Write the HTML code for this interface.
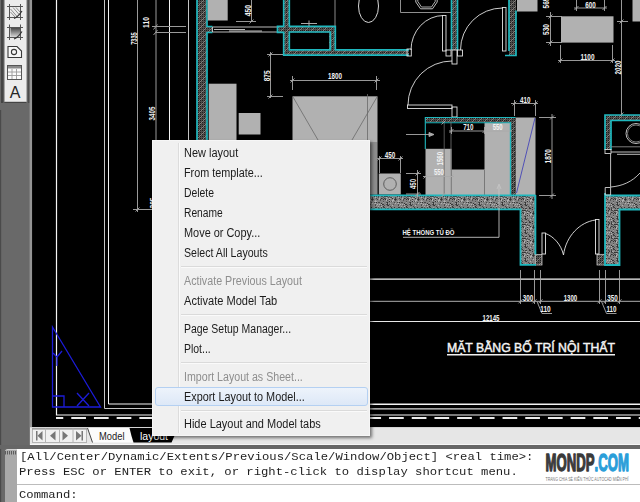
<!DOCTYPE html>
<html>
<head>
<meta charset="utf-8">
<title>AutoCAD layout menu</title>
<style>
html,body{margin:0;padding:0;}
body{width:640px;height:502px;overflow:hidden;background:#696969;position:relative;font-family:"Liberation Sans",sans-serif;}
.abs{position:absolute;}
#draw{left:0;top:0;width:640px;height:502px;}
#tabbar{left:30px;top:426.500px;width:610px;height:18.300px;background:#e6e6e6;border-top:1.500px solid #d4d4d4;border-bottom:1.800px solid #f6f6f6;box-sizing:border-box;}
#cmdbar{left:0;top:444.800px;width:640px;height:4.200px;background:#666;}
#cmd{left:17px;top:449px;width:623px;height:53px;background:#fff;}
#grip{left:4.5px;top:449px;width:13px;height:53px;background:#a9a9a9;border-top:1px solid #d2d2d2;border-radius:3px 0 0 0;box-sizing:border-box;}
.mono{font-family:"Liberation Mono",monospace;font-size:10.5px;color:#1e1e1e;white-space:pre;line-height:14px;transform:scaleX(1.164);transform-origin:0 0;}
#menu{left:152px;top:139.5px;width:218.300px;height:296px;background:#f0f0f0;box-shadow:2px 2px 3px rgba(0,0,0,0.5);border:1px solid #f6f6f6;box-sizing:border-box;}
.mi{position:absolute;margin-top:0.5px;left:30.500px;font-size:12px;color:#1b1b1b;white-space:nowrap;line-height:14px;transform-origin:0 50%;}
.mi.dis{color:#8e8e8e;}
.sep{position:absolute;margin-top:-0.500px;left:28px;right:2px;height:1px;background:#dadada;border-bottom:1px solid #fafafa;}
#gut{position:absolute;left:25px;top:2px;bottom:2px;width:1px;background:#dcdcdc;border-right:1px solid #fafafa;}
#hl{position:absolute;left:2px;top:246px;width:213px;height:19.500px;border:1px solid #b4d0f2;border-radius:3px;background:linear-gradient(#edf3fb,#dde8f7);box-sizing:border-box;}
#logo{left:545px;top:449px;width:90px;height:34px;}
</style>
</head>
<body>
<svg id="draw" class="abs" width="640" height="502" viewBox="0 0 640 502">
<defs>
<pattern id="hatch" width="6" height="6" patternUnits="userSpaceOnUse">
<rect width="6" height="6" fill="#504e4c"/>
<g fill="#1e1e1e"><rect x="0" y="0" width="1" height="1"/><rect x="2" y="0" width="1" height="1"/><rect x="4" y="0" width="1" height="1"/><rect x="0" y="2" width="1" height="1"/><rect x="2" y="2" width="1" height="1"/><rect x="4" y="2" width="1" height="1"/><rect x="0" y="4" width="1" height="1"/><rect x="2" y="4" width="1" height="1"/><rect x="4" y="4" width="1" height="1"/></g>
<path d="M-1 7L7 -1M-1 1L1 -1M5 7L7 5" stroke="#8a8682" stroke-width="0.900"/>
</pattern>
<pattern id="stip" width="23" height="14" patternUnits="userSpaceOnUse">
<rect width="23" height="14" fill="#828282"/>
<rect x="6" y="0" width="1" height="1" fill="#333"/><rect x="8" y="0" width="1" height="1" fill="#3c3c3c"/><rect x="10" y="0" width="1" height="1" fill="#333"/><rect x="13" y="0" width="1" height="1" fill="#484848"/><rect x="14" y="0" width="1" height="1" fill="#484848"/><rect x="16" y="0" width="1" height="1" fill="#333"/><rect x="17" y="0" width="1" height="1" fill="#3c3c3c"/><rect x="18" y="0" width="1" height="1" fill="#333"/><rect x="19" y="0" width="1" height="1" fill="#3c3c3c"/><rect x="21" y="0" width="1" height="1" fill="#484848"/><rect x="0" y="1" width="1" height="1" fill="#484848"/><rect x="1" y="1" width="1" height="1" fill="#a6a6a6"/><rect x="4" y="1" width="1" height="1" fill="#484848"/><rect x="7" y="1" width="1" height="1" fill="#b2b2b2"/><rect x="10" y="1" width="1" height="1" fill="#525252"/><rect x="11" y="1" width="1" height="1" fill="#9c9c9c"/><rect x="15" y="1" width="1" height="1" fill="#525252"/><rect x="18" y="1" width="1" height="1" fill="#b2b2b2"/><rect x="20" y="1" width="1" height="1" fill="#525252"/><rect x="22" y="1" width="1" height="1" fill="#525252"/><rect x="1" y="2" width="1" height="1" fill="#333"/><rect x="4" y="2" width="1" height="1" fill="#3c3c3c"/><rect x="8" y="2" width="1" height="1" fill="#484848"/><rect x="11" y="2" width="1" height="1" fill="#b2b2b2"/><rect x="13" y="2" width="1" height="1" fill="#333"/><rect x="14" y="2" width="1" height="1" fill="#525252"/><rect x="16" y="2" width="1" height="1" fill="#3c3c3c"/><rect x="17" y="2" width="1" height="1" fill="#525252"/><rect x="19" y="2" width="1" height="1" fill="#9c9c9c"/><rect x="21" y="2" width="1" height="1" fill="#b2b2b2"/><rect x="22" y="2" width="1" height="1" fill="#a6a6a6"/><rect x="2" y="3" width="1" height="1" fill="#b2b2b2"/><rect x="3" y="3" width="1" height="1" fill="#3c3c3c"/><rect x="4" y="3" width="1" height="1" fill="#333"/><rect x="5" y="3" width="1" height="1" fill="#525252"/><rect x="9" y="3" width="1" height="1" fill="#3c3c3c"/><rect x="11" y="3" width="1" height="1" fill="#a6a6a6"/><rect x="12" y="3" width="1" height="1" fill="#484848"/><rect x="15" y="3" width="1" height="1" fill="#333"/><rect x="17" y="3" width="1" height="1" fill="#333"/><rect x="18" y="3" width="1" height="1" fill="#b2b2b2"/><rect x="21" y="3" width="1" height="1" fill="#333"/><rect x="1" y="4" width="1" height="1" fill="#b2b2b2"/><rect x="2" y="4" width="1" height="1" fill="#b2b2b2"/><rect x="4" y="4" width="1" height="1" fill="#484848"/><rect x="7" y="4" width="1" height="1" fill="#a6a6a6"/><rect x="12" y="4" width="1" height="1" fill="#525252"/><rect x="18" y="4" width="1" height="1" fill="#b2b2b2"/><rect x="19" y="4" width="1" height="1" fill="#525252"/><rect x="21" y="4" width="1" height="1" fill="#a6a6a6"/><rect x="0" y="5" width="1" height="1" fill="#525252"/><rect x="1" y="5" width="1" height="1" fill="#b2b2b2"/><rect x="6" y="5" width="1" height="1" fill="#9c9c9c"/><rect x="7" y="5" width="1" height="1" fill="#b2b2b2"/><rect x="8" y="5" width="1" height="1" fill="#a6a6a6"/><rect x="15" y="5" width="1" height="1" fill="#525252"/><rect x="21" y="5" width="1" height="1" fill="#333"/><rect x="22" y="5" width="1" height="1" fill="#9c9c9c"/><rect x="3" y="6" width="1" height="1" fill="#484848"/><rect x="6" y="6" width="1" height="1" fill="#484848"/><rect x="8" y="6" width="1" height="1" fill="#333"/><rect x="10" y="6" width="1" height="1" fill="#484848"/><rect x="11" y="6" width="1" height="1" fill="#484848"/><rect x="15" y="6" width="1" height="1" fill="#9c9c9c"/><rect x="18" y="6" width="1" height="1" fill="#525252"/><rect x="19" y="6" width="1" height="1" fill="#333"/><rect x="4" y="7" width="1" height="1" fill="#b2b2b2"/><rect x="6" y="7" width="1" height="1" fill="#9c9c9c"/><rect x="7" y="7" width="1" height="1" fill="#b2b2b2"/><rect x="13" y="7" width="1" height="1" fill="#333"/><rect x="18" y="7" width="1" height="1" fill="#9c9c9c"/><rect x="19" y="7" width="1" height="1" fill="#3c3c3c"/><rect x="20" y="7" width="1" height="1" fill="#9c9c9c"/><rect x="22" y="7" width="1" height="1" fill="#9c9c9c"/><rect x="2" y="8" width="1" height="1" fill="#525252"/><rect x="7" y="8" width="1" height="1" fill="#525252"/><rect x="9" y="8" width="1" height="1" fill="#b2b2b2"/><rect x="11" y="8" width="1" height="1" fill="#b2b2b2"/><rect x="13" y="8" width="1" height="1" fill="#b2b2b2"/><rect x="14" y="8" width="1" height="1" fill="#333"/><rect x="15" y="8" width="1" height="1" fill="#3c3c3c"/><rect x="18" y="8" width="1" height="1" fill="#525252"/><rect x="19" y="8" width="1" height="1" fill="#333"/><rect x="21" y="8" width="1" height="1" fill="#525252"/><rect x="1" y="9" width="1" height="1" fill="#b2b2b2"/><rect x="7" y="9" width="1" height="1" fill="#484848"/><rect x="8" y="9" width="1" height="1" fill="#9c9c9c"/><rect x="12" y="9" width="1" height="1" fill="#525252"/><rect x="16" y="9" width="1" height="1" fill="#525252"/><rect x="19" y="9" width="1" height="1" fill="#484848"/><rect x="20" y="9" width="1" height="1" fill="#333"/><rect x="10" y="10" width="1" height="1" fill="#a6a6a6"/><rect x="13" y="10" width="1" height="1" fill="#b2b2b2"/><rect x="15" y="10" width="1" height="1" fill="#333"/><rect x="22" y="10" width="1" height="1" fill="#484848"/><rect x="0" y="11" width="1" height="1" fill="#3c3c3c"/><rect x="3" y="11" width="1" height="1" fill="#333"/><rect x="7" y="11" width="1" height="1" fill="#3c3c3c"/><rect x="8" y="11" width="1" height="1" fill="#3c3c3c"/><rect x="10" y="11" width="1" height="1" fill="#525252"/><rect x="13" y="11" width="1" height="1" fill="#484848"/><rect x="15" y="11" width="1" height="1" fill="#484848"/><rect x="16" y="11" width="1" height="1" fill="#3c3c3c"/><rect x="19" y="11" width="1" height="1" fill="#9c9c9c"/><rect x="0" y="12" width="1" height="1" fill="#333"/><rect x="1" y="12" width="1" height="1" fill="#333"/><rect x="5" y="12" width="1" height="1" fill="#525252"/><rect x="6" y="12" width="1" height="1" fill="#525252"/><rect x="10" y="12" width="1" height="1" fill="#484848"/><rect x="11" y="12" width="1" height="1" fill="#525252"/><rect x="13" y="12" width="1" height="1" fill="#484848"/><rect x="17" y="12" width="1" height="1" fill="#3c3c3c"/><rect x="19" y="12" width="1" height="1" fill="#3c3c3c"/><rect x="20" y="12" width="1" height="1" fill="#3c3c3c"/><rect x="3" y="13" width="1" height="1" fill="#3c3c3c"/><rect x="11" y="13" width="1" height="1" fill="#333"/><rect x="13" y="13" width="1" height="1" fill="#333"/><rect x="14" y="13" width="1" height="1" fill="#a6a6a6"/><rect x="15" y="13" width="1" height="1" fill="#9c9c9c"/><rect x="20" y="13" width="1" height="1" fill="#b2b2b2"/>
</pattern>
<filter id="soft" x="-2%" y="-10%" width="104%" height="120%"><feGaussianBlur stdDeviation="0.450"/></filter>
<linearGradient id="gr" x1="0" y1="0" x2="0" y2="1"><stop offset="0" stop-color="#4a4a4a"/><stop offset="1" stop-color="#d8d8d8"/></linearGradient>
</defs>
<!-- frame strips on the left -->
<rect x="0" y="0" width="31" height="449" fill="#696969"/>
<rect x="1" y="0" width="2" height="103" fill="#454545"/><rect x="3" y="0" width="1.500" height="103" fill="#5a5a5a"/>
<rect x="26.500" y="0" width="1" height="103" fill="#8a8a8a"/>
<rect x="27.500" y="0" width="2.300" height="103" fill="#4c4c4c"/>
<rect x="29.600" y="0" width="2.600" height="445" fill="#949494"/>
<rect x="0" y="110" width="1.200" height="392" fill="#4a4a4a"/>
<!-- black canvas -->
<rect x="32.100" y="0" width="607.900" height="427" fill="#000"/>
<g id="cad" fill="none" stroke-width="1">
<!-- ===== far-left sheet border / dimension lines ===== -->
<g stroke="#f4f4f4">
<path d="M56.500 0V415H640" stroke-width="1.200"/>
<path d="M108.500 0V404H152"/>
<path d="M169.5 0V140"/>
</g>
<g stroke="#c4c4c4">
<path d="M104.500 0V408.500H152"/>
<path d="M188.5 0V140"/>
</g>
<g stroke="#9a9a9a">
<path d="M137.500 0V212M133 209.500H152M135.500 211.500l4 -4"/>
<path d="M156 0V140"/>
<path d="M152 26.500H186M156 32.500H186M153.500 29.500l4 -5M153.500 35l4 -5"/>
</g>
<!-- dashed sheet edge -->
<path d="M56 418H640" stroke="#ececec" stroke-width="2" stroke-dasharray="14.700 8" stroke-dashoffset="7.450"/>
<path d="M370 404.300H640" stroke="#f4f4f4" stroke-width="1.400"/>
<path d="M370 408.800H640" stroke="#dcdcdc" stroke-width="1.300"/>
<path d="M370 279.200H640" stroke="#f6f6f6" stroke-width="1.300"/>
<path d="M370 301.300H640" stroke="#b0b0b0"/>
<path d="M370 321.500H640" stroke="#e8e8e8"/>

<!-- ===== blue UCS triangle ===== -->
<g stroke="#1c1cd8" stroke-width="1.300">
<path d="M52.500 327V407H100.500Z"/>
<path d="M52.500 396H64V407"/>
<path d="M53 353l4 4v9M57 357l5 -6"/>
<path d="M77 393l12 13M89 393l-12 13"/>
</g>

<!-- ===== left vertical wall ===== -->
<rect x="197" y="0" width="10" height="140" fill="url(#hatch)" stroke="none"/>
<rect x="207" y="26.500" width="5.500" height="6" fill="url(#hatch)" stroke="none"/>
<g stroke="#1fb8be" stroke-width="1.700">
<path d="M197 0V140"/>
<path d="M207 0V26.500H212.500M212.500 32.500H207V140"/>
</g>
<!-- furniture grey blocks -->
<g fill="#b1b1b1" stroke="none">
<rect x="207.700" y="0" width="20" height="20.500"/>
<rect x="208.700" y="83.700" width="27.800" height="57"/>
<rect x="238.700" y="113" width="21.800" height="21.500"/>
<rect x="292.500" y="96.300" width="85" height="98.500"/>
<rect x="517" y="0" width="20.500" height="11.500"/>
<rect x="561" y="16.300" width="52.500" height="26.300"/>
<rect x="632.500" y="0" width="8" height="21.500"/>
<rect x="378.800" y="173.500" width="22" height="21"/>
<rect x="425.500" y="148.800" width="26" height="46.200"/>
<rect x="451" y="169.500" width="34" height="25.500"/>
<rect x="484.500" y="122.500" width="26" height="72.500"/>
<rect x="515.500" y="117.500" width="20" height="77.500"/>
</g>
<!-- bed lines -->
<g stroke="#6a6a6a" stroke-width="0.800">
<path d="M293 97L318 140M377 97L352 140M367.500 94V140"/>
<path d="M451.300 149V195M484.500 170V195M444.200 122V195"/>
</g>
<circle cx="390" cy="184" r="6.300" stroke="#555" stroke-width="0.900"/>
<path d="M535 118L516.500 193" stroke="#3030b8" stroke-width="0.750"/>

<!-- window in top wall -->
<g stroke="#cfcfcf" stroke-width="0.900">
<path d="M212.500 27H277.500M212.500 32H277.500M212.500 27V32"/>
<path d="M214 29.500H245M229 31H262"/>
</g>

<!-- ===== top small room walls ===== -->
<g fill="url(#hatch)" stroke="none">
<rect x="277.500" y="26.500" width="58" height="6"/>
<rect x="283.500" y="0" width="6" height="55.500"/>
<rect x="329" y="26.500" width="6.500" height="29"/>
<rect x="283.500" y="50" width="125.500" height="5.500"/>
<rect x="451.500" y="0" width="6" height="50"/>
<rect x="509" y="0" width="7" height="55"/>
</g>
<g stroke="#1fb8be" stroke-width="1.700">
<path d="M283.700 0V26.300H277.500V32.300H283.700V55.200H409"/>
<path d="M289.300 0V26.300H335.300V49.800H409"/>
<path d="M289.300 32H330.300V49.800H289.300Z"/>
<path d="M451.500 0V50M457.500 0V50"/>
<path d="M509 0V51M516 10.500V55.500H505"/>
</g>
<path d="M335 0V26" stroke="#8a8a8a"/>
<path d="M301 23.500H317M309 20.500V26" stroke="#aaa"/>
<!-- toilet + sink -->
<ellipse cx="368.500" cy="6" rx="10" ry="16.500" stroke="#d8d8d8"/>
<path d="M400.500 0V12.500H451" stroke="#8f8f8f"/>
<path d="M415.800 0V2L420.500 8.800H432.500L437.200 2V0" stroke="#d4d4d4" stroke-width="0.900" stroke-linejoin="round"/><path d="M417.800 0V1.500L421.500 7H431.500L435.200 1.500V0" stroke="#bdbdbd" stroke-width="0.900" stroke-linejoin="round"/>
<!-- doors -->
<g stroke="#e2e2e2" stroke-width="0.900">
<rect x="442.500" y="15.500" width="3.500" height="35.500"/>
<path d="M443.500 15.500A32.500 34.500 0 0 0 411 50"/>
<rect x="407" y="49" width="4.300" height="7"/>
<rect x="446" y="50" width="5" height="6"/><rect x="457.500" y="50" width="5" height="6"/>
<rect x="452" y="50" width="5" height="14"/>
<rect x="502.500" y="7.500" width="3.500" height="43.500"/>
<path d="M502.500 8A42 42 0 0 0 460.500 50"/>
<rect x="407.500" y="105" width="44.500" height="3.500"/>
<path d="M408 105A44 44 0 0 1 452 61"/>
<rect x="452" y="107" width="5" height="10"/>
</g>

<!-- ===== wardrobe walls ===== -->
<g fill="url(#hatch)" stroke="none">
<rect x="425" y="117" width="90.500" height="5"/>
<rect x="510.500" y="117" width="5" height="78"/>
</g>
<g stroke="#1fb8be" stroke-width="1.400">
<path d="M425.300 149V117.500H515.500" stroke-width="1.100"/>
<path d="M425.500 122.700H510.500" stroke-width="1.100"/><path d="M510.500 122V195"/>
</g>
<path d="M451 122V170" stroke="#777" stroke-width="0.800"/>
<!-- big stippled wall -->
<g fill="url(#stip)" stroke="none" filter="url(#soft)">
<rect x="370" y="195" width="165" height="14"/>
<rect x="521" y="195" width="14" height="70"/>
<rect x="605" y="195" width="35" height="14"/>
<rect x="605" y="195" width="14.500" height="70"/>
</g>
<rect x="535.600" y="254.600" width="6.400" height="10.400" fill="url(#hatch)" stroke="#ddd" stroke-width="0.700"/>
<rect x="597" y="254.300" width="8" height="10.700" fill="url(#hatch)" stroke="#ddd" stroke-width="0.700"/>
<g stroke="#1fb8be" stroke-width="1.800">
<path d="M370 195.300H535.400"/>
<path d="M370 209.300H520.500V264.800H536M535.400 195V254.600"/>
<path d="M605 193V265H619.500V209.500H640"/>
<path d="M605 195.500H640"/>
</g>
<!-- right wall (bath) -->
<g fill="url(#hatch)" stroke="none">
<rect x="605" y="115" width="35" height="5.500"/>
<rect x="605" y="115" width="6" height="35"/>
</g>
<g stroke="#1fb8be" stroke-width="1.700">
<path d="M640 115H605V150"/>
<path d="M640 120.500H611V150"/>
</g>
<g stroke="#d4d4d4" stroke-width="0.900">
<rect x="605" y="149.500" width="6" height="4"/>
<path d="M611 146.800H640" stroke="#8a8a8a"/><path d="M611 152H640M617 154.300H640"/>
<path d="M610.600 154V187.500M605.200 187.500H610.600V195H605.200Z"/>
<circle cx="636" cy="133.500" r="10"/><circle cx="636" cy="133.500" r="8.500" stroke="#888"/>
<path d="M611 187C622 186 632 182 640 173"/>
<path d="M621.500 0V115" stroke="#aaa"/>
</g>
<!-- bottom double door -->
<g stroke="#e6e6e6" stroke-width="0.900">
<rect x="542" y="233" width="3.500" height="21"/>
<rect x="595.500" y="219.500" width="3.500" height="34.500"/>
<path d="M545.500 233.500C553 236 561 244 563.500 255"/>
<path d="M595.500 220C580 222 566 236 563.500 255"/>
</g>
<!-- ===== dimension lines ===== -->
<g stroke="#a9a9a9" stroke-width="0.900">
<!-- 450 top -->
<path d="M251.500 0V22M236 21.500H256M249.500 23.500l4 -4"/>
<!-- 875 -->
<path d="M270.500 52V98M267 54.500H283M267 96.500H283M268.500 56.500l4 -4M268.500 98.500l4 -4"/>
<!-- 1800 -->
<path d="M290 80.500H380M292.500 76V90M376.500 76V90M290.500 82.500l4 -4M374.500 82.500l4 -4"/>
<!-- 530 -->
<path d="M550.500 12V46M546 16.500H562M546 42.500H562M548.500 18.500l4 -4M548.500 44.500l4 -4"/>
<!-- 600 -->
<path d="M574 8H607M576.500 0V11M604.500 0V11M574.500 10l4 -4M602.500 10l4 -4"/>
<!-- 1100 -->
<path d="M558 60.500H615M560.500 45V63M612.500 45V63M558.500 62.500l4 -4M610.500 62.500l4 -4"/>
<!-- 2020 -->
<path d="M617 21.500H628M619.500 23.500l4 -4M619.500 116.500l4 -4"/>
<!-- 410 -->
<path d="M511 103.500H538M514.500 100V116M535.500 100V116M512.500 105.500l4 -4M533.500 105.500l4 -4"/>
<!-- 1870 -->
<path d="M552 114V199M539 117.500H556M539 195.500H556M550 119.500l4 -4M550 197.500l4 -4"/>
<!-- small tick right of 410 -->
<!-- 710 / 550 -->
<path d="M449 131H512M451.500 127V134M484.500 127V134M449.500 133l4 -4M482.500 133l4 -4"/>
<!-- 1560 -->
<path d="M441.500 124.500l4 -4M441.500 197l4 -4"/>
<!-- 550 lower -->
<path d="M423 176.500H454M423.500 178.500l4 -4M449.500 178.500l4 -4"/>
<!-- arrow -->
<path d="M406 134.500H434M434 134.500l-5 -2v4z" fill="#a9a9a9"/>
<!-- 450 (nightstand) -->
<path d="M377 158.500H403M379.500 156V173M400.500 156V173M377.500 160.500l4 -4M398.500 160.500l4 -4"/>
<path d="M417.500 170V197M406 173.500H421M406 194H421M415.500 175.500l4 -4M415.500 196l4 -4"/>
<!-- leader for HE THONG TU DO -->
<path d="M499 185V237.300H403M497 189l2 -5l2 5" stroke="#c4c4c4"/>
<!-- bottom chain dims -->
<path d="M520.500 270V304M534.500 270V304M540.500 270V304M599.500 270V304M605.500 270V304M619.500 270V304"/>
<path d="M518.500 303.300l4 -4M532.500 303.300l4 -4M538.500 303.300l4 -4M597.500 303.300l4 -4M603.500 303.300l4 -4M617.500 303.300l4 -4"/>
<path d="M537 301.500l5 12H552M601.500 301.500l5 12H616.500"/>
</g>
<!-- ===== dimension text ===== -->
<g fill="#f2f2f2" stroke="none" font-family="'Liberation Sans',sans-serif" font-weight="bold" font-size="9" text-anchor="middle">
<text x="335" y="79" textLength="14" lengthAdjust="spacingAndGlyphs">1800</text>
<text x="590.500" y="7.500" textLength="10.500" lengthAdjust="spacingAndGlyphs">600</text>
<text x="587.500" y="59.500" textLength="14" lengthAdjust="spacingAndGlyphs">1100</text>
<text x="525.200" y="102.900" textLength="10.500" lengthAdjust="spacingAndGlyphs">410</text>
<text x="468.300" y="130.300" textLength="10.300" lengthAdjust="spacingAndGlyphs">710</text>
<text x="497.700" y="130.300" textLength="10" lengthAdjust="spacingAndGlyphs">550</text>
<text x="438.900" y="175.200" textLength="10" lengthAdjust="spacingAndGlyphs">550</text>
<text x="390" y="157.800" textLength="10.500" lengthAdjust="spacingAndGlyphs">450</text>
<text x="528" y="300.800" textLength="10.500" lengthAdjust="spacingAndGlyphs">300</text>
<text x="570.500" y="300.800" textLength="13.500" lengthAdjust="spacingAndGlyphs">1300</text>
<text x="612.500" y="300.500" textLength="10.500" lengthAdjust="spacingAndGlyphs">350</text>
<text x="545.500" y="312" textLength="10.500" lengthAdjust="spacingAndGlyphs">110</text>
<text x="611.500" y="312" textLength="10" lengthAdjust="spacingAndGlyphs">110</text>
<text x="491" y="320.500" textLength="17" lengthAdjust="spacingAndGlyphs">12145</text>
<text transform="translate(250.800 10.600) rotate(-90)" textLength="11.500" lengthAdjust="spacingAndGlyphs">450</text>
<text transform="translate(270 75.800) rotate(-90)" textLength="11" lengthAdjust="spacingAndGlyphs">875</text>
<text transform="translate(548.700 29.500) rotate(-90)" textLength="11" lengthAdjust="spacingAndGlyphs">530</text>
<text transform="translate(548.700 3) rotate(-90)" textLength="11" lengthAdjust="spacingAndGlyphs">565</text>
<text transform="translate(620.800 67.500) rotate(-90)" textLength="14" lengthAdjust="spacingAndGlyphs">2020</text>
<text transform="translate(551.300 156.300) rotate(-90)" textLength="14.300" lengthAdjust="spacingAndGlyphs">1870</text>
<text transform="translate(443.200 158.700) rotate(-90)" textLength="13.500" lengthAdjust="spacingAndGlyphs">1560</text>
<text transform="translate(415.500 184) rotate(-90)" textLength="10" lengthAdjust="spacingAndGlyphs">450</text>
<text transform="translate(149 22.500) rotate(-90)" textLength="11" lengthAdjust="spacingAndGlyphs">110</text>
<text transform="translate(136.800 38.500) rotate(-90)" textLength="12.500" lengthAdjust="spacingAndGlyphs">7335</text>
<text transform="translate(155.500 203) rotate(-90)" textLength="11" lengthAdjust="spacingAndGlyphs">305</text>
<text transform="translate(155 113.500) rotate(-90)" textLength="13.800" lengthAdjust="spacingAndGlyphs">3405</text>
<text x="428.500" y="235" font-size="7.500" textLength="52" lengthAdjust="spacingAndGlyphs">HỆ THỐNG TỦ ĐỒ</text>
</g>
<text id="ttl" x="447" y="352.300" fill="#f4f4f4" stroke="#f4f4f4" stroke-width="0.450" font-family="'Liberation Sans',sans-serif" font-size="12.700" textLength="168" lengthAdjust="spacingAndGlyphs">MẶT BẰNG BỐ TRÍ NỘI THẤT</text>
<path d="M447 354.800H615" stroke="#f0f0f0" stroke-width="1.500"/>
<rect x="370" y="142" width="7.500" height="53" fill="#000" fill-opacity="0.2" stroke="none"/>
</g>
<!-- ===== toolbar ===== -->
<rect x="4.500" y="0" width="22" height="102" fill="#ececec"/>
<path d="M4.500 102.300H26.500" stroke="#3a3a3a" stroke-width="1"/>
<g fill="none" stroke="#3c3c3c" stroke-width="1">
<!-- hatch icon -->
<path d="M9.500 4V20M20.500 4V20M7 6.500H23M7 17.500H23" stroke="#555"/>
<path d="M10.500 9l7 8M10.500 12l4.500 5M13 7.500l7 8M16 7.500l4 4.500" stroke="#777" stroke-width="0.800"/>
<path d="M14 18.500C18 17 20 14 22 11" stroke="#333" stroke-width="1.200"/>
<!-- gradient icon -->
<rect x="10.500" y="28" width="9.500" height="9" fill="url(#gr)" stroke="none"/>
<path d="M9.500 24.500V40M20.500 24.500V40M7 27.500H23M7 37.500H23" stroke="#555"/>
<path d="M14 39C18 37.500 20 34.500 22 31.500" stroke="#333" stroke-width="1.200"/>
<!-- region icon -->
<path d="M8 46.500H17L21.500 51V57.500H8Z" fill="#f8f8f8" stroke="#3a3a3a" stroke-width="1.100"/>
<circle cx="14" cy="52" r="2.600" stroke="#3a3a3a" stroke-width="1.100"/>
<!-- table icon -->
<rect x="7.500" y="65.500" width="14" height="14" fill="#fafafa" stroke="#555"/>
<rect x="8" y="66" width="13" height="2.500" fill="#8a8a8a" stroke="none"/>
<path d="M8 72H21M8 75.500H21M12 69V79M16.500 69V79" stroke="#9a9a9a" stroke-width="0.900"/>
</g>
<text x="15" y="98.400" text-anchor="middle" font-family="'Liberation Sans',sans-serif" font-size="16" fill="#262626">A</text>
</svg>

<!-- tab bar -->
<div id="tabbar" class="abs"></div>
<svg class="abs" style="left:31px;top:427px" width="160" height="18" viewBox="31 427 160 18">
<rect x="32.500" y="429" width="54" height="13.500" fill="#f1f1f1" stroke="#b4b4b4" stroke-width="1"/><path d="M32 428.800H87" stroke="#7a7a7a" stroke-width="0.800"/>
<path d="M45.500 428.500V442.500M59.500 428.500V442.500M73 428.500V442.500" stroke="#b4b4b4"/>
<g fill="#777">
<rect x="36" y="431" width="1.500" height="9.500"/><path d="M42.500 431V440.500L37.500 435.750Z"/>
<path d="M55.500 431V440.500L50 435.750Z"/>
<path d="M62.500 431V440.500L68 435.750Z"/>
<path d="M76 431V440.500L81.500 435.750Z"/><rect x="81.500" y="431" width="1.500" height="9.500"/>
</g>
<!-- model tab -->
<path d="M87.500 428L92.500 442.500H133L130 428Z" fill="#fbfbfb"/>
<path d="M87.500 428L92.500 442.500" stroke="#444" stroke-width="1" fill="none"/>
<!-- layout tab -->
<path d="M129.500 428H178L171.500 442.500H133.500L131.500 436Z" fill="#000"/>
<text x="99" y="439.600" font-family="'Liberation Sans',sans-serif" font-size="11" fill="#1c1c1c" textLength="25.500" lengthAdjust="spacingAndGlyphs">Model</text>
<text x="140" y="439.600" font-family="'Liberation Sans',sans-serif" font-size="11" fill="#fff" textLength="28" lengthAdjust="spacingAndGlyphs">layout</text>
</svg>
<div id="cmdbar" class="abs"></div>
<div id="grip" class="abs"></div>
<svg class="abs" style="left:5px;top:451px" width="12" height="4" viewBox="0 0 12 4"><path d="M0.500 0V3.500M2.500 0V3.500M4.500 0V3.500M6.500 0V3.500M8.500 0V3.500M10.500 0V3.500" stroke="#5c5c5c" stroke-width="1"/></svg>
<div id="cmd" class="abs">
<div class="mono abs" style="left:3.300px;top:1.300px;">[All/Center/Dynamic/Extents/Previous/Scale/Window/Object] &lt;real time&gt;:</div>
<div class="mono abs" style="left:2.300px;top:15.800px;">Press ESC or ENTER to exit, or right-click to display shortcut menu.</div>
<div class="abs" style="left:0;top:35.300px;width:623px;height:1.200px;background:#bcbcbc;"></div>
<div class="mono abs" style="left:2px;top:39px;">Command:</div>
</div>
<!-- logo -->
<svg id="logo" class="abs" width="90" height="34" viewBox="545 449 90 34">
<rect x="545" y="449" width="90" height="34" fill="#fff"/>
<g font-family="'Liberation Sans',sans-serif" font-weight="bold" font-size="23.500" stroke-width="1.100" stroke-linejoin="round" style="paint-order:stroke">
<text id="lg1" transform="translate(545.600 470.500) scale(.56 1)" fill="#3a3a3a" stroke="#3a3a3a" vector-effect="non-scaling-stroke">MONDP</text>
<text id="lg2" transform="translate(594.500 470.500) scale(.56 1)" fill="#2a9ed9" stroke="#2a9ed9" vector-effect="non-scaling-stroke">.COM</text>
</g>
<text x="545.500" y="480.800" font-family="'Liberation Sans',sans-serif" font-size="5" fill="#777" textLength="83" lengthAdjust="spacingAndGlyphs">TRANG CHIA SẺ KIẾN THỨC AUTOCAD MIỄN PHÍ</text>
</svg>

<!-- context menu -->
<div id="menu" class="abs">
<div id="gut"></div>
<div id="hl"></div>
<div class="mi" style="top:5px;transform:scaleX(.913)">New layout</div>
<div class="mi" style="top:25px;transform:scaleX(.901)">From template...</div>
<div class="mi" style="top:45px;transform:scaleX(.865)">Delete</div>
<div class="mi" style="top:65px;transform:scaleX(.854)">Rename</div>
<div class="mi" style="top:85px;transform:scaleX(.91)">Move or Copy...</div>
<div class="mi" style="top:105px;transform:scaleX(.884)">Select All Layouts</div>
<div class="sep" style="top:126px;"></div>
<div class="mi dis" style="top:133px;transform:scaleX(.893)">Activate Previous Layout</div>
<div class="mi" style="top:153px;transform:scaleX(.922)">Activate Model Tab</div>
<div class="sep" style="top:174px;"></div>
<div class="mi" style="top:181px;transform:scaleX(.872)">Page Setup Manager...</div>
<div class="mi" style="top:201px;transform:scaleX(.872)">Plot...</div>
<div class="sep" style="top:222px;"></div>
<div class="mi dis" style="top:229px;transform:scaleX(.886)">Import Layout as Sheet...</div>
<div class="mi" style="top:249px;transform:scaleX(.905)">Export Layout to Model...</div>
<div class="sep" style="top:270px;"></div>
<div class="mi" style="top:276px;transform:scaleX(.915)">Hide Layout and Model tabs</div>
</div>
</body>
</html>
